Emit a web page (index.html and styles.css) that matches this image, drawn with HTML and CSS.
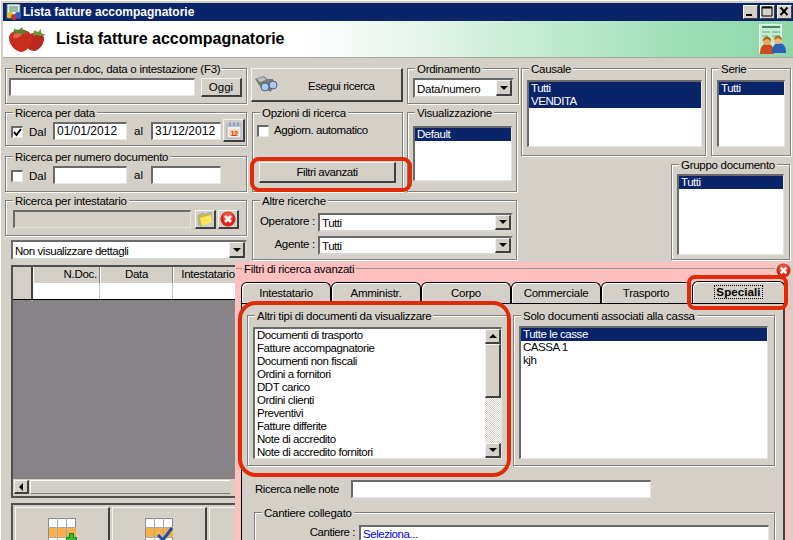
FILE: index.html
```html
<!DOCTYPE html>
<html lang="it">
<head>
<meta charset="utf-8">
<title>Lista fatture accompagnatorie</title>
<link rel="stylesheet" href="styles.css">
</head>
<body>
<div class="window">
  <div class="titlebar">
    <svg class="title-icon" width="16" height="17" viewBox="0 0 16 17"><rect x="1" y="0" width="13" height="14" fill="#e8efe8" stroke="#6a7a70"/><path d="M3 3h9M3 5h9M3 7h9" stroke="#4a8a6a"/><circle cx="4" cy="11" r="3" fill="#d8c020"/><circle cx="8" cy="13" r="3" fill="#d03030"/><circle cx="12" cy="11" r="3" fill="#3060c0"/></svg>
    <span class="title-text">Lista fatture accompagnatorie</span>
    <div class="wincontrols">
      <span class="winbtn"><svg width="15" height="13" viewBox="0 0 15 13"><rect x="3" y="9" width="6" height="2" fill="#000"/></svg></span>
      <span class="winbtn"><svg width="15" height="13" viewBox="0 0 15 13"><path d="M2 2h10v9H2z" fill="none" stroke="#000"/><path d="M2 2.500h10" stroke="#000" stroke-width="2"/></svg></span>
      <span class="winbtn"><svg width="15" height="13" viewBox="0 0 15 13"><path d="M3.500 2.500l7 7.500M10.500 2.500l-7 7.500" stroke="#000" stroke-width="2"/></svg></span>
    </div>
  </div>
  <div class="banner">
    <svg class="berries" width="38" height="25" viewBox="0 0 38 25">
      <path d="M25 6c6-2 11 1 11 6 0 6-6 12-10 12-5 0-8-4-8-9 0-4 3-8 7-9z" fill="#b8281c"/>
      <path d="M9 3c6-2 14 1 15 7 1 7-5 14-10 15C8 25 1 18 1 11 1 7 5 4 9 3z" fill="#c82c1c"/>
      <path d="M6 7c3-2 6-2 8 0-1 3-6 5-9 4z" fill="#e86050"/>
      <path d="M6 2l5 1 3-3 1 4 5 1-5 2-5-1-4 1z" fill="#4f8a30"/>
      <path d="M26 3l4 2 3-3 0 4 5 2-5 1-4-1-4 1z" fill="#6a9a38"/>
    </svg>
    <span class="banner-title">Lista fatture accompagnatorie</span>
    <svg class="people" width="28" height="31" viewBox="0 0 28 31">
      <rect x="1.500" y=".5" width="22" height="28" fill="#c6ecd4" stroke="#e8f6ee"/>
      <path d="M4 3h18" stroke="#3d8a62" stroke-width="2"/><path d="M4 8h8M14 8h8M4 12h6M14 12h8M4 16h5" stroke="#62a880"/>
      <path d="M2 30c0-8 3-10 7-10s7 2 7 10z" fill="#d04a20"/><circle cx="9" cy="17" r="4" fill="#e8a860"/><path d="M5 17c0-6 8-6 8 0l-4-2z" fill="#a86820"/>
      <path d="M14 29c0-7 3-10 7-10s7 3 7 10z" fill="#2a62b8"/><circle cx="20" cy="16" r="4" fill="#f0b880"/><path d="M16 16c0-6 8-6 8 0l-4-2z" fill="#a87020"/>
    </svg>
  </div>

  <main class="form">
    <div class="col-left">
      <section class="group g-search">
        <span class="legend">Ricerca per n.doc, data o intestazione (F3)</span>
        <span class="field f-search"></span>
        <span class="btn b-oggi">Oggi</span>
      </section>
      <section class="group g-date">
        <span class="legend">Ricerca per data</span>
        <span class="check"><svg width="9" height="9" viewBox="0 0 9 9"><path d="M1 4l2.500 3L8 1" fill="none" stroke="#000" stroke-width="2"/></svg></span>
        <span class="lbl-dal">Dal</span>
        <span class="field f-from">01/01/2012</span>
        <span class="lbl-al">al</span>
        <span class="field f-to">31/12/2012</span>
        <span class="btn b-cal"><svg width="16" height="17" viewBox="0 0 16 17"><rect x="1" y="2" width="14" height="14" fill="#eef0fa" stroke="#a0a8c8"/><path d="M1 2h14v3H1z" fill="#b8c0dc"/><path d="M4 0v4M8 0v4M12 0v4" stroke="#8088a0"/><rect x="3" y="7" width="10" height="7" fill="#f8d8a8"/><text x="8" y="14" class="cal-num">12</text></svg></span>
      </section>
      <section class="group g-number">
        <span class="legend">Ricerca per numero documento</span>
        <span class="check"></span>
        <span class="lbl-dal">Dal</span>
        <span class="field f-from"></span>
        <span class="lbl-al">al</span>
        <span class="field f-to"></span>
      </section>
      <section class="group g-holder">
        <span class="legend">Ricerca per intestatario</span>
        <span class="field f-holder"></span>
        <span class="btn b-icon"><svg width="16" height="16" viewBox="0 0 16 16"><path d="M1 5l5-3 1 2 7-3 1 9-11 5-2-1z" fill="#d8b830" stroke="#88b0c8"/><path d="M3 7l11-3 1 7-10 4z" fill="#fbe860"/></svg></span>
        <span class="btn b-icon"><svg width="16" height="16" viewBox="0 0 16 16"><circle cx="8" cy="8" r="7.500" fill="#d82818"/><circle cx="8" cy="6" r="5" fill="#ee5040"/><path d="M5 5l6 6M11 5l-6 6" stroke="#fff" stroke-width="2.500"/></svg></span>
      </section>
      <div class="select s-detail"><span class="select-text">Non visualizzare dettagli</span><span class="arrow-btn"><i class="tri-down"></i></span></div>
      <div class="grid">
        <div class="grid-head">
          <span class="hc hc-0"></span><span class="hc hc-1">N.Doc.</span><span class="hc hc-2">Data</span><span class="hc hc-3">Intestatario</span>
        </div>
        <div class="grid-row">
          <span class="rc-0"></span><span class="rc rc-1"></span><span class="rc rc-2"></span><span class="rc rc-3"></span>
        </div>
        <div class="grid-empty"></div>
        <div class="hscroll"><span class="arrow-btn ab-left"><i class="tri-left"></i></span><span class="hthumb"></span></div>
      </div>
      <div class="actions">
        <div class="action">
          <svg width="29" height="23" viewBox="0 0 29 23"><rect x=".5" y=".5" width="27" height="30" fill="#fff" stroke="#8a8a8a"/><rect x="1" y="10" width="27" height="9" fill="#f8b048"/><path d="M9.500 0v23M18.500 0v23M0 9.500h28M0 19.500h28" stroke="#a8a8a8"/><path d="M21.500 15.500h4v4h3v3.500h-10v-3.500h3z" fill="#30c030" stroke="#108010"/></svg>
        </div>
        <div class="action">
          <svg width="29" height="23" viewBox="0 0 29 23"><rect x=".5" y=".5" width="27" height="30" fill="#fff" stroke="#8a8a8a"/><rect x="1" y="10" width="27" height="9" fill="#f8b048"/><path d="M9.500 0v23M18.500 0v23M0 9.500h28M0 19.500h28" stroke="#a8a8a8"/><path d="M13 17l5 5L27 10" fill="none" stroke="#1850b0" stroke-width="3"/></svg>
        </div>
        <div class="action"></div>
      </div>
    </div>

    <div class="col-mid">
      <div class="mid-top">
        <div class="mid-a">
          <div class="btn b-run">
            <svg width="24" height="20" viewBox="0 0 24 20"><path d="M1 4l9-3 3 3 6 0 3 7-6 6-5-4-4 0z" fill="#7a7a78"/><path d="M3 4l7-2 2 3-6 2z" fill="#c0c0bc"/><circle cx="11" cy="12" r="4" fill="#a8c8ec" stroke="#50607a"/><circle cx="19" cy="10" r="4" fill="#a8c8ec" stroke="#50607a"/></svg>
            <span class="run-text">Esegui ricerca</span>
          </div>
          <section class="group g-options">
            <span class="legend">Opzioni di ricerca</span>
            <div class="auto-row"><span class="check"></span><span class="auto-lbl">Aggiorn. automatico</span></div>
            <span class="btn b-filter">Filtri avanzati</span>
          </section>
        </div>
        <div class="mid-b">
          <section class="group g-order">
            <span class="legend">Ordinamento</span>
            <div class="select s-order"><span class="select-text">Data/numero</span><span class="arrow-btn"><i class="tri-down"></i></span></div>
          </section>
          <section class="group g-view">
            <span class="legend">Visualizzazione</span>
            <div class="list l-view"><div class="sel">Default</div></div>
          </section>
        </div>
      </div>
      <section class="group g-other">
        <span class="legend">Altre ricerche</span>
        <div class="other-row"><span class="other-lbl">Operatore :</span><div class="select s-other"><span class="select-text">Tutti</span><span class="arrow-btn"><i class="tri-down"></i></span></div></div>
        <div class="other-row"><span class="other-lbl">Agente :</span><div class="select s-other"><span class="select-text">Tutti</span><span class="arrow-btn"><i class="tri-down"></i></span></div></div>
      </section>
    </div>

    <div class="col-right">
      <div class="right-top">
        <section class="group g-cause">
          <span class="legend">Causale</span>
          <div class="list l-fill"><div class="sel">Tutti</div><div class="sel">VENDITA</div></div>
        </section>
        <section class="group g-series">
          <span class="legend">Serie</span>
          <div class="list l-fill"><div class="sel">Tutti</div></div>
        </section>
      </div>
      <section class="group g-docgroup">
        <span class="legend">Gruppo documento</span>
        <div class="list l-fill"><div class="sel">Tutti</div></div>
      </section>
    </div>
  </main>

  <aside class="popup">
    <span class="popup-legend">Filtri di ricerca avanzati</span>
    <span class="popup-close"><svg width="15" height="15" viewBox="0 0 16 16"><circle cx="8" cy="8" r="7.500" fill="#d82818"/><circle cx="8" cy="6" r="5" fill="#ee5040"/><path d="M5 5l6 6M11 5l-6 6" stroke="#fff" stroke-width="2.500"/></svg></span>
    <div class="tabs">
      <span class="tab">Intestatario</span>
      <span class="tab">Amministr.</span>
      <span class="tab">Corpo</span>
      <span class="tab">Commerciale</span>
      <span class="tab">Trasporto</span>
      <span class="tab is-active"><span class="focus">Speciali</span></span>
    </div>
    <div class="panel">
      <div class="panel-lists">
        <section class="group g-types">
          <span class="legend">Altri tipi di documenti da visualizzare</span>
          <div class="list l-types">
            <div class="types-items">
              <div>Documenti di trasporto</div>
              <div>Fatture accompagnatorie</div>
              <div>Documenti non fiscali</div>
              <div>Ordini a fornitori</div>
              <div>DDT carico</div>
              <div>Ordini clienti</div>
              <div>Preventivi</div>
              <div>Fatture differite</div>
              <div>Note di accredito</div>
              <div>Note di accredito fornitori</div>
            </div>
            <div class="vscroll">
              <span class="arrow-btn ab-v"><i class="tri-up"></i></span>
              <span class="vthumb"></span>
              <span class="vtrack"></span>
              <span class="arrow-btn ab-v"><i class="tri-down"></i></span>
            </div>
          </div>
        </section>
        <section class="group g-cash">
          <span class="legend">Solo documenti associati alla cassa</span>
          <div class="list l-fill"><div class="sel">Tutte le casse</div><div>CASSA 1</div><div>kjh</div></div>
        </section>
      </div>
      <div class="note-row"><span class="note-lbl">Ricerca nelle note</span><span class="field f-note"></span></div>
      <section class="group g-site">
        <span class="legend">Cantiere collegato</span>
        <span class="site-lbl">Cantiere :</span>
        <span class="field f-site">Seleziona...</span>
      </section>
    </div>
  </aside>

  <div class="mark mark-filter"></div>
  <div class="mark mark-types"></div>
  <div class="mark mark-special"></div>
</div>
</body>
</html>
```

FILE: styles.css
```css
* { box-sizing: border-box; }
html, body { margin: 0; padding: 0; width: 793px; height: 540px; overflow: hidden; }
body { font: 11.5px/14px "Liberation Sans", Arial, sans-serif; letter-spacing: -.45px; color: #000; background: #d4d0c8; }

.window { position: relative; width: 793px; height: 540px; overflow: hidden; background: #d4d0c8; padding-top: 3px; box-shadow: inset 1px 1px 0 #fff; }

/* title bar */
.titlebar { margin-left: 3px; height: 18px; background: #0a246a; color: #fff; display: flex; align-items: center; padding-left: 3px; }
.title-icon { flex: none; }
.title-text { margin-left: 1px; font-weight: bold; font-size: 12px; letter-spacing: 0; }
.wincontrols { margin-left: auto; display: flex; gap: 2px; padding-right: 1px; }
.winbtn { width: 15px; height: 14px; background: #d4d0c8; border: 1px solid; border-color: #fff #404040 #404040 #fff; display: flex; overflow: hidden; }
.winbtn svg { margin: -1px 0 0 -1px; flex: none; }

/* banner */
.banner { margin-left: 3px; height: 37px; display: flex; align-items: center; background: linear-gradient(90deg, #fff 0, #fff 38%, #e6f5ec 52%, #bfeacf 70%, #9fe0b8 85%, #8ed6a8 100%); border-bottom: 1px solid #a8a8a0; }
.berries { margin-left: 5px; flex: none; }
.banner-title { margin-left: 10px; font-size: 16px; line-height: 22px; font-weight: bold; letter-spacing: 0; }
.people { margin-left: auto; margin-right: 7px; flex: none; }

/* layout */
.form { display: flex; padding: 10px 0 0 5px; }
.col-left { width: 242px; flex: none; }
.col-mid { width: 268px; margin-left: 4px; flex: none; }
.col-right { width: 270px; margin-left: 2px; flex: none; }
.mid-top { display: flex; }
.mid-a { width: 152px; flex: none; }
.mid-b { width: 112px; margin-left: 4px; flex: none; }
.right-top { display: flex; gap: 5px; }

/* etched group */
.group { position: relative; border: 1px solid #808080; box-shadow: inset 1px 1px 0 #fff, 1px 1px 0 #fff; display: flex; }
.legend { position: absolute; top: -7px; left: 7px; padding: 0 2px; background: #d4d0c8; white-space: nowrap; letter-spacing: -.28px; }

/* 3D parts */
.field { display: block; background: #fff; border-style: solid; border-width: 2px 1px 1px 2px; border-color: #6a6a6a #e8e6e0 #e8e6e0 #6a6a6a; line-height: 15px; padding-left: 2px; white-space: nowrap; overflow: hidden; }
.btn { display: flex; align-items: center; justify-content: center; background: #d4d0c8; border-style: solid; border-width: 1px 2px 2px 1px; border-color: #f4f4f0 #404040 #404040 #f4f4f0; flex: none; }
.check { width: 12px; height: 12px; background: #fff; border-style: solid; border-width: 2px 1px 1px 2px; border-color: #6a6a6a #e8e6e0 #e8e6e0 #6a6a6a; flex: none; display: flex; align-items: center; justify-content: center; }
.select { display: flex; align-items: center; background: #fff; border-style: solid; border-width: 2px; border-color: #6a6a6a #d8d6d0 #d8d6d0 #6a6a6a; flex: none; }
.select-text { flex: 1; padding: 1px 0 0 2px; white-space: nowrap; }
.arrow-btn { display: flex; align-items: center; justify-content: center; width: 16px; height: 100%; background: #d4d0c8; border-style: solid; border-width: 1px 2px 2px 1px; border-color: #f4f4f0 #404040 #404040 #f4f4f0; flex: none; }
.tri-down { width: 0; height: 0; border: 4px solid transparent; border-top-color: #000; border-bottom-width: 0; }
.tri-up { width: 0; height: 0; border: 4px solid transparent; border-bottom-color: #000; border-top-width: 0; }
.tri-left { width: 0; height: 0; border: 4px solid transparent; border-right-color: #000; border-left-width: 0; }
.list { background: #fff; border-style: solid; border-width: 2px 1px 1px 2px; border-color: #6a6a6a #e8e6e0 #e8e6e0 #6a6a6a; line-height: 13px; overflow: hidden; }
.list > div { white-space: nowrap; }
.sel { background: #0a246a; color: #fff; padding-left: 2px; }
.l-fill { flex: 1; }
.l-fill > div:not(.sel) { padding-left: 2px; }

/* left column */
.g-search { height: 36px; padding: 9px 0 0 3px; }
.f-search { width: 186px; height: 18px; }
.b-oggi { width: 41px; height: 19px; margin-left: 6px; letter-spacing: 0; }
.g-date { height: 34px; margin-top: 8px; }
.g-number { height: 36px; margin-top: 10px; }
.g-date, .g-number { padding: 9px 0 0 5px; align-items: flex-start; }
.g-date .check, .g-number .check { margin-top: 4px; }
.lbl-dal { margin: 3px 0 0 6px; width: 24px; letter-spacing: 0; }
.f-from { width: 74px; height: 18px; font-size: 12px; letter-spacing: 0; }
.lbl-al { margin: 2px 0 0 7px; width: 17px; letter-spacing: 0; }
.f-to { width: 70px; height: 18px; font-size: 12px; letter-spacing: 0; }
.b-cal { width: 22px; height: 23px; margin: -3px 0 0 2px; }
.cal-num { font: bold 7px "Liberation Sans", sans-serif; fill: #e03010; text-anchor: middle; }
.g-holder { height: 36px; margin-top: 8px; padding: 9px 0 0 7px; align-items: flex-start; }
.f-holder { width: 178px; height: 18px; background: #d4d0c8; }
.b-icon { width: 21px; height: 19px; margin-left: 4px; }
.b-icon + .b-icon { margin-left: 2px; }
.s-detail { margin: 4px 0 0 6px; width: 236px; height: 20px; }
.grid { width: 225px; height: 233px; margin: 5px 0 0 6px; border: 2px solid #505050; border-right: 0; display: flex; flex-direction: column; background: #878488; overflow: hidden; }
.grid-head, .grid-row { display: flex; flex: none; background: #d4d0c8; }
.grid-head { height: 16px; }
.grid-row { height: 17px; background: #fff; border-bottom: 1px solid #000; }
.hc { border-left: 1px solid #fff; border-right: 1px solid #808080; text-align: center; line-height: 15px; flex: none; letter-spacing: -.28px; }
.hc-0 { width: 20px; border-right: 2px solid #404040; border-left: 0; }
.hc-1 { width: 67px; text-align: right; padding-right: 2px; }
.hc-2 { width: 73px; }
.hc-3 { width: 70px; white-space: nowrap; }
.rc-0 { width: 20px; background: #d4d0c8; border-right: 2px solid #404040; flex: none; }
.rc { border-right: 1px solid #c8c8c8; flex: none; }
.rc-1 { width: 67px; }
.rc-2 { width: 73px; }
.rc-3 { width: 70px; }
.grid-empty { flex: 1; }
.hscroll { flex: none; height: 17px; background: #d4d0c8; display: flex; padding: 1px 0 0 1px; }
.ab-left { width: 15px; height: 14px; }
.hthumb { width: 200px; margin-left: 1px; height: 14px; border-style: solid; border-width: 1px 0 1px 1px; border-color: #fff #000 #808080 #fff; }
.actions { width: 225px; height: 60px; margin: 5px 0 0 6px; border-style: solid; border-width: 2px 0 0 2px; border-color: #505050; display: flex; padding: 2px 0 0 2px; gap: 2px; }
.action { width: 95px; height: 60px; flex: none; border-style: solid; border-width: 1px 2px 0 1px; border-color: #f4f4f0 #404040 #404040 #f4f4f0; display: flex; justify-content: center; padding-top: 10px; overflow: hidden; }
.action svg { flex: none; }

/* middle column */
.b-run { width: 152px; height: 34px; justify-content: flex-start; padding-left: 2px; }
.run-text { margin: 2px 0 0 30px; }
.g-options { margin: 10px 0 0 1px; width: 151px; height: 80px; flex-direction: column; padding: 11px 0 0 4px; }
.auto-row { display: flex; gap: 5px; height: 14px; }
.auto-row .check { margin-top: 1px; }
.auto-lbl { margin-top: -1px; }
.b-filter { width: 137px; height: 21px; margin: 24px 0 0 2px; }
.g-order { height: 36px; padding: 9px 0 0 5px; }
.s-order { width: 101px; height: 20px; letter-spacing: -.28px; }
.g-view { width: 110px; height: 80px; margin-top: 8px; padding: 13px 0 0 5px; }
.l-view { width: 99px; height: 55px; }
.g-other { width: 265px; height: 60px; margin: 8px 0 0 1px; flex-direction: column; padding: 12px 0 0 0; gap: 4px; }
.other-row { display: flex; align-items: center; }
.other-lbl { width: 62px; text-align: right; flex: none; margin: 0 3px 3px 0; letter-spacing: -.28px; }
.s-other { width: 195px; height: 19px; }

/* right column */
.g-cause { width: 185px; height: 88px; padding: 11px 3px 8px 5px; }
.g-series { width: 80px; height: 88px; padding: 11px 5px 8px 5px; }
.g-docgroup { width: 119px; height: 96px; margin: 8px 0 0 150px; padding: 9px 5px 4px 5px; }

/* popup */
.popup { position: absolute; left: 235px; top: 262px; width: 555px; height: 278px; background: #ffc0c0; padding: 20px 5px 0 6px; }
.popup::before { content: ""; position: absolute; left: 1px; right: 1px; top: 6px; height: 1px; background: #9a9090; }
.popup-legend { position: absolute; left: 7px; top: 0; padding: 0 2px; background: #ffc0c0; letter-spacing: -.28px; }
.popup-close { position: absolute; right: -1px; top: 1px; width: 16px; height: 14px; overflow: hidden; background: #d4d0c8; display: flex; justify-content: center; }
.popup-close svg { flex: none; }
.tabs { display: flex; height: 21px; align-items: flex-end; }
.tab { width: 90px; height: 21px; background: #d4d0c8; border: 1px solid #000; border-bottom: 0; border-radius: 6px 6px 0 0; box-shadow: inset 1px 1px 0 #fff; text-align: center; line-height: 21px; flex: none; letter-spacing: -.28px; }
.tab.is-active { width: 93px; margin-left: 1px; height: 22px; font-weight: bold; line-height: 21px; position: relative; letter-spacing: .1px; }
.focus { border: 1px dotted #000; padding: 0 1px; }
.panel { width: 544px; height: 240px; background: #d4d0c8; border-top: 1px solid #000; border-left: 1px solid #000; border-right: 2px solid #404040; padding-top: 11px; }
.panel-lists { display: flex; }
.g-types { width: 262px; height: 151px; margin-left: 5px; padding: 11px 6px 6px 5px; }
.l-types { flex: 1; display: flex; }
.types-items { flex: 1; padding-left: 2px; }
.vscroll { width: 16px; flex: none; display: flex; flex-direction: column; }
.ab-v { width: 16px; height: 15px; }
.vthumb { height: 54px; flex: none; background: #d4d0c8; border-style: solid; border-width: 1px 2px 2px 1px; border-color: #f4f4f0 #404040 #404040 #f4f4f0; }
.vtrack { flex: 1; background: repeating-conic-gradient(#fff 0 25%, #d4d0c8 0 50%) 0 0 / 2px 2px; }
.g-cash { width: 262px; height: 151px; margin-left: 4px; padding: 10px 6px 6px 5px; }
.note-row { display: flex; align-items: center; margin-top: 14px; padding-left: 13px; height: 18px; }
.note-lbl { width: 96px; flex: none; white-space: nowrap; }
.f-note { width: 300px; height: 18px; }
.g-site { width: 521px; height: 60px; margin: 14px 0 0 12px; padding: 12px 0 0 0; }
.site-lbl { width: 100px; flex: none; margin-right: 4px; text-align: right; white-space: nowrap; }
.f-site { width: 410px; height: 30px; color: #0000f0; }

/* red annotation marks */
.mark { position: absolute; border: 4px solid #e12a06; pointer-events: none; }
.mark-filter { left: 250px; top: 157px; width: 162px; height: 35px; border-radius: 9px; }
.mark-types { left: 238px; top: 301px; width: 273px; height: 176px; border-radius: 18px; }
.mark-special { left: 687px; top: 275px; width: 101px; height: 35px; border-radius: 8px; }
```
